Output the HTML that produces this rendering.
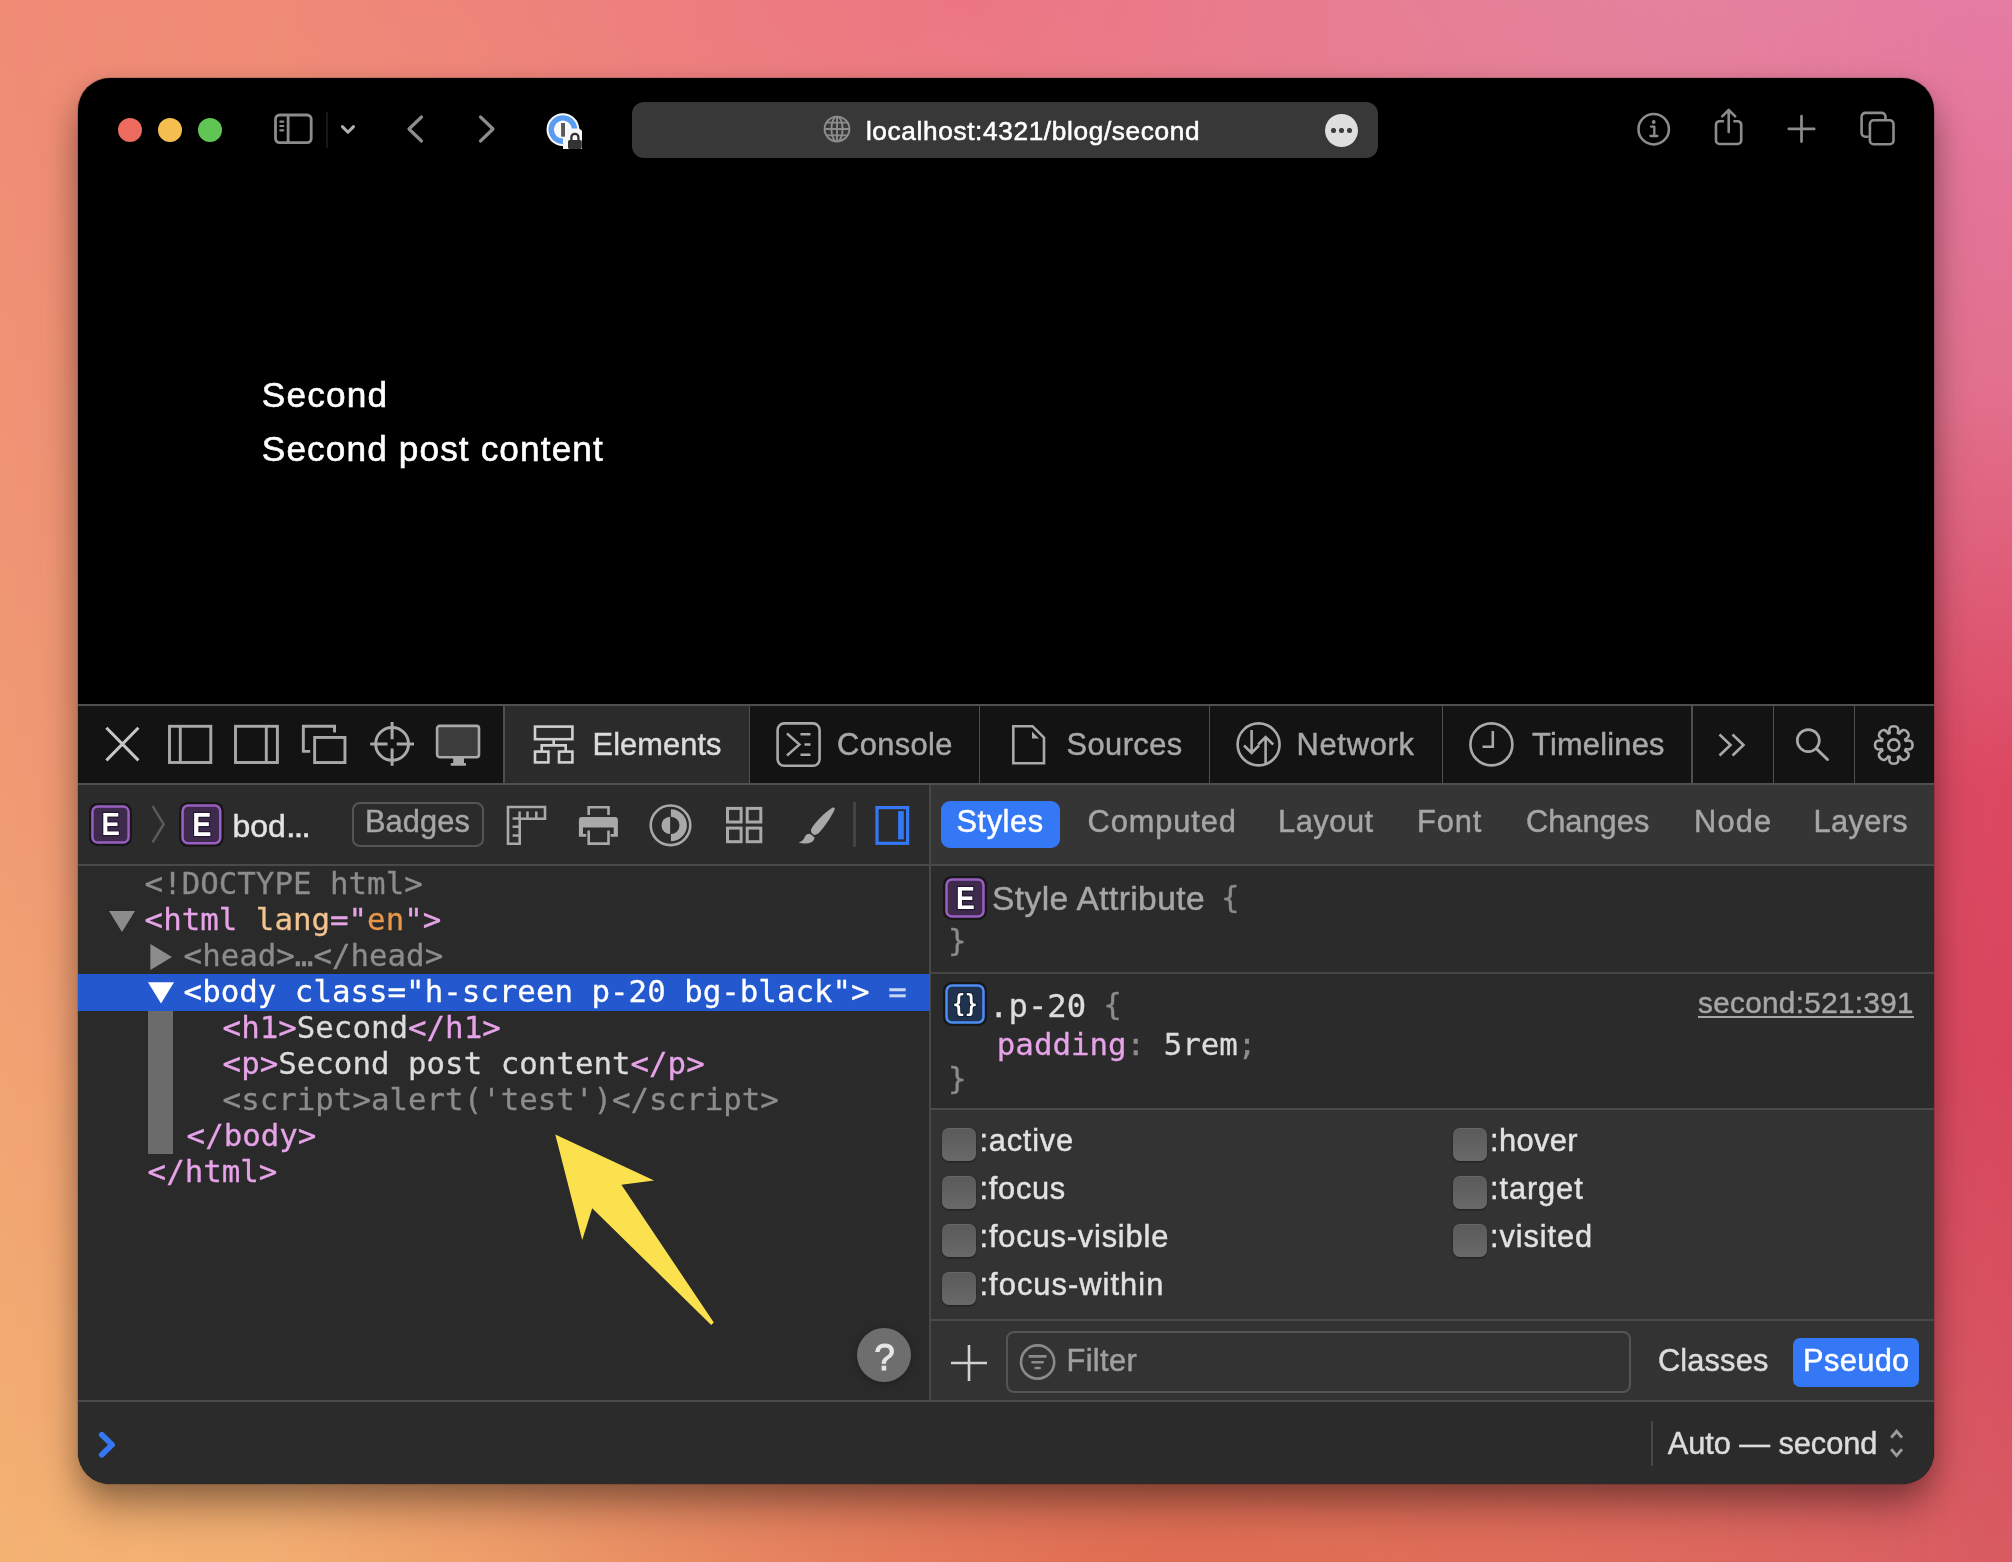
<!DOCTYPE html>
<html lang="en">
<head>
<meta charset="utf-8">
<title>Safari Web Inspector - localhost:4321/blog/second</title>
<style>
html,body{margin:0;padding:0;}
body{width:2012px;height:1562px;overflow:hidden;background:#e87080;}
#desk{position:relative;width:2012px;height:1562px;overflow:hidden;
 background:linear-gradient(to bottom,#e67aa4 0%,#e2708e 25%,#dc4862 50%,#d8465e 68%,#d85a64 100%);}
#deskL{position:absolute;left:0;top:0;width:2012px;height:1562px;
 background:linear-gradient(to bottom,#ef8b75 0%,#f09a73 50%,#f3b272 100%);
 -webkit-mask-image:linear-gradient(to right,#000 0%,rgba(0,0,0,.93) 25%,rgba(0,0,0,.62) 50%,rgba(0,0,0,.3) 72%,rgba(0,0,0,0) 100%);
 mask-image:linear-gradient(to right,#000 0%,rgba(0,0,0,.93) 25%,rgba(0,0,0,.62) 50%,rgba(0,0,0,.3) 72%,rgba(0,0,0,0) 100%);}
#deskB{position:absolute;left:0;top:0;width:2012px;height:1562px;
 background:radial-gradient(ellipse 900px 420px at 58% 100%, rgba(222,104,78,.85) 0%, rgba(222,104,78,0) 100%),
            radial-gradient(ellipse 700px 300px at 48% 0%, rgba(236,112,128,.7) 0%, rgba(236,112,128,0) 100%),
            radial-gradient(ellipse 600px 300px at 72% 0%, rgba(226,134,160,.7) 0%, rgba(226,134,160,0) 100%);}
.b{position:absolute;box-sizing:border-box;}
.t{position:absolute;white-space:pre;line-height:1em;}
.s{font-family:"Liberation Sans",sans-serif;-webkit-text-stroke:0.45px;}
.m{font-family:"DejaVu Sans Mono","Liberation Mono",monospace;-webkit-text-stroke:0.3px;}
#win{position:absolute;left:78px;top:78px;width:1856px;height:1406px;border-radius:32px;background:#000;
 box-shadow:0 0 0 1px rgba(0,0,0,.12), 0 24px 42px -2px rgba(0,0,0,.36), 0 8px 22px rgba(0,0,0,.13);}
#clip{will-change:transform;position:absolute;left:78px;top:78px;width:1856px;height:1406px;border-radius:32px;overflow:hidden;}
#clip > .in{position:absolute;left:-78px;top:-78px;width:2012px;height:1562px;}

</style>
</head>
<body>
<div id="desk">
<div id="deskL"></div><div id="deskB"></div><div id="win"></div>
<div id="clip"><div class="in">
<div class="b" style="left:118px;top:118px;width:24px;height:24px;border-radius:50%;background:#ec6a5e;"></div>
<div class="b" style="left:158px;top:118px;width:24px;height:24px;border-radius:50%;background:#f4bf4f;"></div>
<div class="b" style="left:198px;top:118px;width:24px;height:24px;border-radius:50%;background:#61c554;"></div>
<svg class="b" style="left:270px;top:110px;" width="48" height="40" viewBox="0 0 48 40"><rect x="5.5" y="5" width="35.7" height="27.6" rx="4" fill="none" stroke="#8c8c8c" stroke-width="2.8"/><path d="M18.1 5V32.6" stroke="#8c8c8c" stroke-width="2.8"/><path d="M10.3 11.6h3M10.3 16h3M10.3 20.3h3" stroke="#8c8c8c" stroke-width="2.2" stroke-linecap="round"/></svg>
<div class="b" style="left:326px;top:112px;width:2px;height:36px;background:#181818;"></div>
<svg class="b" style="left:336px;top:120px;" width="24" height="20" viewBox="0 0 24 20"><path d="M6.4 6.6L11.95 12.2L17.5 6.6" fill="none" stroke="#b0b0b0" stroke-width="3" stroke-linecap="round" stroke-linejoin="round"/></svg>
<svg class="b" style="left:400px;top:108px;" width="32" height="42" viewBox="0 0 32 42"><path d="M21.5 9L9 21L21.5 33" fill="none" stroke="#8c8c8c" stroke-width="3.2" stroke-linecap="round" stroke-linejoin="round"/></svg>
<svg class="b" style="left:471.3px;top:108px;" width="32" height="42" viewBox="0 0 32 42"><path d="M9.5 9L22 21L9.5 33" fill="none" stroke="#8c8c8c" stroke-width="3.2" stroke-linecap="round" stroke-linejoin="round"/></svg>
<svg class="b" style="left:542px;top:110px;" width="44" height="42" viewBox="0 0 44 42"><circle cx="20.9" cy="19.6" r="16.4" fill="#fafafa"/><circle cx="20.9" cy="19.6" r="11.7" fill="none" stroke="#5b9cf3" stroke-width="5.4"/><path d="M21 39V18.4H37L40 20.8V39Z" fill="#f7f7f7"/><rect x="19.1" y="13" width="3.9" height="13.7" fill="#585858"/><path d="M29.35 31V27.4a3.55 3.55 0 0 1 7.1 0V31" fill="none" stroke="#333" stroke-width="2.3"/><rect x="26" y="30" width="13.8" height="8.9" rx="1.6" fill="#333"/></svg>
<div class="b" style="left:632px;top:102px;width:746px;height:56px;border-radius:12px;background:#383838;"></div>
<svg class="b" style="left:822px;top:114px;" width="30" height="30" viewBox="0 0 30 30"><g fill="none" stroke="#8c8c8c" stroke-width="1.9"><circle cx="15" cy="15" r="12.4"/><ellipse cx="15" cy="15" rx="5.6" ry="12.4"/><path d="M15 2.6V27.4M2.6 15H27.4M4.6 8.6H25.4M4.6 21.4H25.4"/></g></svg>
<span id="url" class="t s" style="left:865.90px;top:118.42px;font-size:26.2px;color:#ffffff;letter-spacing:0.648px;-webkit-text-stroke:0.55px;">localhost:4321/blog/second</span>
<div class="b" style="left:1325px;top:114px;width:33px;height:33px;border-radius:50%;background:#dedede;"></div>
<div class="b" style="left:1331.3999999999999px;top:128.3px;width:4.4px;height:4.4px;border-radius:50%;background:#3a3a3a;"></div>
<div class="b" style="left:1339.3999999999999px;top:128.3px;width:4.4px;height:4.4px;border-radius:50%;background:#3a3a3a;"></div>
<div class="b" style="left:1347.3999999999999px;top:128.3px;width:4.4px;height:4.4px;border-radius:50%;background:#3a3a3a;"></div>
<svg class="b" style="left:1634px;top:108px;" width="40" height="42" viewBox="0 0 40 42"><circle cx="19.7" cy="21.2" r="15.2" fill="none" stroke="#8c8c8c" stroke-width="2.5"/><circle cx="19.7" cy="14" r="1.9" fill="#8c8c8c"/><path d="M17 18.6h3.3v9M16.4 28h7" fill="none" stroke="#8c8c8c" stroke-width="2.3" stroke-linecap="round" stroke-linejoin="round"/></svg>
<svg class="b" style="left:1708px;top:104px;" width="42" height="46" viewBox="0 0 42 46"><path d="M15 17.2H11.6a3.6 3.6 0 0 0-3.6 3.6V36.4a3.6 3.6 0 0 0 3.6 3.6H29.6a3.6 3.6 0 0 0 3.6-3.6V20.8a3.6 3.6 0 0 0-3.6-3.6H26.4" fill="none" stroke="#8c8c8c" stroke-width="2.6" stroke-linecap="round"/><path d="M20.7 28V6.4M14.2 12.4L20.7 6L27.2 12.4" fill="none" stroke="#8c8c8c" stroke-width="2.6" stroke-linecap="round" stroke-linejoin="round"/></svg>
<svg class="b" style="left:1786px;top:113px;" width="32" height="32" viewBox="0 0 32 32"><path d="M15.5 3.2V28.6M2.8 15.9H28.2" stroke="#8c8c8c" stroke-width="2.7" stroke-linecap="round"/></svg>
<svg class="b" style="left:1856px;top:106px;" width="44" height="44" viewBox="0 0 44 44"><path d="M12.6 30.8H9.4a3.8 3.8 0 0 1-3.8-3.8V10.7a3.8 3.8 0 0 1 3.8-3.8H25.7a3.8 3.8 0 0 1 3.8 3.8V13.4" fill="none" stroke="#8c8c8c" stroke-width="2.6"/><rect x="13.9" y="14.3" width="23.6" height="24" rx="3.8" fill="none" stroke="#8c8c8c" stroke-width="2.6"/></svg>
<span id="h1" class="t s" style="left:261.80px;top:376.50px;font-size:35.2px;color:#ffffff;letter-spacing:1.188px;-webkit-text-stroke:0.6px;">Second</span>
<span id="p1" class="t s" style="left:261.80px;top:430.60px;font-size:35.2px;color:#ffffff;letter-spacing:1.120px;-webkit-text-stroke:0.6px;">Second post content</span>
<div class="b" style="left:78px;top:704px;width:1856px;height:2px;background:#4f4f4f;"></div>
<div class="b" style="left:78px;top:706px;width:1856px;height:77px;background:#131313;"></div>
<div class="b" style="left:504px;top:706px;width:245px;height:77px;background:#2b2b2b;"></div>
<div class="b" style="left:78px;top:783px;width:1856px;height:2px;background:#4f4f4f;"></div>
<div class="b" style="left:503px;top:706px;width:1.6px;height:77px;background:#4f4f4f;"></div>
<div class="b" style="left:748.5px;top:706px;width:1.6px;height:77px;background:#4f4f4f;"></div>
<div class="b" style="left:978.5px;top:706px;width:1.6px;height:77px;background:#4f4f4f;"></div>
<div class="b" style="left:1208.5px;top:706px;width:1.6px;height:77px;background:#4f4f4f;"></div>
<div class="b" style="left:1441.5px;top:706px;width:1.6px;height:77px;background:#4f4f4f;"></div>
<div class="b" style="left:1691px;top:706px;width:1.6px;height:77px;background:#4f4f4f;"></div>
<div class="b" style="left:1772.5px;top:706px;width:1.6px;height:77px;background:#4f4f4f;"></div>
<div class="b" style="left:1853.5px;top:706px;width:1.6px;height:77px;background:#4f4f4f;"></div>
<svg class="b" style="left:100px;top:722px;" width="44" height="44" viewBox="0 0 44 44"><path d="M6.4 5.8L38.4 38.4M38.4 5.8L6.4 38.4" stroke="#c6c6c6" stroke-width="3"/></svg>
<svg class="b" style="left:164px;top:722px;" width="52" height="46" viewBox="0 0 52 46"><rect x="5.5" y="4.3" width="41.3" height="36.2" fill="none" stroke="#a9a9a9" stroke-width="2.9"/><path d="M16.3 4.3V40.5" stroke="#a9a9a9" stroke-width="2.9"/></svg>
<svg class="b" style="left:230px;top:722px;" width="52" height="46" viewBox="0 0 52 46"><rect x="5.5" y="4.3" width="41.9" height="36.2" fill="none" stroke="#a9a9a9" stroke-width="2.9"/><path d="M36.3 4.3V40.5" stroke="#a9a9a9" stroke-width="2.9"/></svg>
<svg class="b" style="left:298px;top:722px;" width="52" height="46" viewBox="0 0 52 46"><path d="M12.2 29.35H5.35V4.25H36.55V10.6" fill="none" stroke="#a9a9a9" stroke-width="2.9"/><rect x="16.65" y="15.45" width="30.3" height="25.1" fill="none" stroke="#a9a9a9" stroke-width="2.9"/></svg>
<svg class="b" style="left:366px;top:718px;" width="52" height="52" viewBox="0 0 52 52"><circle cx="26.1" cy="25.9" r="16.4" fill="none" stroke="#a9a9a9" stroke-width="3"/><path d="M26.1 4V21.3M26.1 30.5V47.8M4.2 25.9H21.5M30.7 25.9H48" stroke="#a9a9a9" stroke-width="3"/></svg>
<svg class="b" style="left:432px;top:722px;" width="52" height="46" viewBox="0 0 52 46"><rect x="5.1" y="3.9" width="41.9" height="31.3" rx="2.6" fill="#3c3c3c" stroke="#a9a9a9" stroke-width="2.6"/><rect x="21.2" y="36" width="10.8" height="5.4" fill="#a9a9a9"/><rect x="18.7" y="41" width="15.3" height="2.7" rx="0.8" fill="#a9a9a9"/></svg>
<svg class="b" style="left:530px;top:722px;" width="48" height="46" viewBox="0 0 48 46"><g fill="none" stroke="#d0d0d0" stroke-width="2.6"><rect x="5" y="4.6" width="37.4" height="12.6"/><rect x="5" y="29.6" width="13.4" height="10.8"/><rect x="29" y="29.6" width="13.4" height="10.8"/><path d="M11.7 29.6V23.4H35.7V29.6M23.7 17.2V23.4"/></g></svg>
<span id="tab_el" class="t s" style="left:592.50px;top:730.23px;font-size:30.8px;color:#dcdcdc;letter-spacing:0.087px;">Elements</span>
<svg class="b" style="left:772px;top:718px;" width="54" height="54" viewBox="0 0 54 54"><rect x="5.6" y="5.4" width="42" height="42.4" rx="6.5" fill="none" stroke="#a9a9a9" stroke-width="2.6"/><path d="M15 15.5L27.5 26.5L15 37.5M28.5 16.2H38.5M32.5 26.5H38.5M28.5 36.8H38.5" fill="none" stroke="#a9a9a9" stroke-width="2.4"/></svg>
<span id="tab_co" class="t s" style="left:837.00px;top:730.23px;font-size:30.8px;color:#a8a8a8;letter-spacing:0.390px;">Console</span>
<svg class="b" style="left:1006px;top:720px;" width="46" height="50" viewBox="0 0 46 50"><path d="M7.3 6.2H26.5L38 17.7V43.2H7.3Z" fill="none" stroke="#a9a9a9" stroke-width="2.6"/><path d="M26 11.5V18.5H33Z" fill="#a9a9a9"/></svg>
<span id="tab_so" class="t s" style="left:1066.50px;top:730.23px;font-size:30.8px;color:#a8a8a8;letter-spacing:0.450px;">Sources</span>
<svg class="b" style="left:1232px;top:718px;" width="54" height="54" viewBox="0 0 54 54"><g fill="none" stroke="#a9a9a9" stroke-width="2.6"><circle cx="26.6" cy="26.4" r="21"/><path d="M19.6 12V34.5M12 27.5L19.6 35L27 27.5M33.6 46V19.5M26.2 26.5L33.6 19L41.2 26.5"/></g></svg>
<span id="tab_ne" class="t s" style="left:1296.50px;top:730.23px;font-size:30.8px;color:#a8a8a8;letter-spacing:0.750px;">Network</span>
<svg class="b" style="left:1464px;top:718px;" width="54" height="54" viewBox="0 0 54 54"><g fill="none" stroke="#a9a9a9" stroke-width="2.6"><circle cx="27.4" cy="26.4" r="21"/><path d="M28.8 13V28.8H18.5"/></g></svg>
<span id="tab_ti" class="t s" style="left:1532.00px;top:730.23px;font-size:30.8px;color:#a8a8a8;letter-spacing:0.225px;">Timelines</span>
<svg class="b" style="left:1714px;top:728px;" width="36" height="34" viewBox="0 0 36 34"><path d="M5.5 6.5L16.5 17L5.5 27.5M18.5 6.5L29.5 17L18.5 27.5" fill="none" stroke="#a9a9a9" stroke-width="2.6"/></svg>
<svg class="b" style="left:1792px;top:724px;" width="40" height="40" viewBox="0 0 40 40"><circle cx="16.3" cy="16.6" r="11" fill="none" stroke="#a9a9a9" stroke-width="2.7"/><path d="M24.3 24.6L35.5 35.5" stroke="#a9a9a9" stroke-width="2.9" stroke-linecap="round"/></svg>
<svg class="b" style="left:1870px;top:720px;" width="48" height="50" viewBox="0 0 48 50"><path d="M19.73 13.07Q17.90 6.21 23.80 6.20Q29.70 6.21 27.87 13.07A12.60 12.60 0 0 1 29.36 13.69Q32.92 7.54 37.09 11.71Q41.26 15.88 35.11 19.44A12.60 12.60 0 0 1 35.73 20.93Q42.59 19.10 42.60 25.00Q42.59 30.90 35.73 29.07A12.60 12.60 0 0 1 35.11 30.56Q41.26 34.12 37.09 38.29Q32.92 42.46 29.36 36.31A12.60 12.60 0 0 1 27.87 36.93Q29.70 43.79 23.80 43.80Q17.90 43.79 19.73 36.93A12.60 12.60 0 0 1 18.24 36.31Q14.68 42.46 10.51 38.29Q6.34 34.12 12.49 30.56A12.60 12.60 0 0 1 11.87 29.07Q5.01 30.90 5.00 25.00Q5.01 19.10 11.87 20.93A12.60 12.60 0 0 1 12.49 19.44Q6.34 15.88 10.51 11.71Q14.68 7.54 18.24 13.69A12.60 12.60 0 0 1 19.73 13.07Z" fill="none" stroke="#a9a9a9" stroke-width="2.6" stroke-linejoin="round"/><circle cx="23.8" cy="25" r="5.6" fill="none" stroke="#a9a9a9" stroke-width="2.6"/></svg>
<div class="b" style="left:78px;top:785px;width:852px;height:79px;background:#2b2b2b;"></div>
<div class="b" style="left:931px;top:785px;width:1003px;height:79px;background:#353535;"></div>
<div class="b" style="left:78px;top:864px;width:1856px;height:1.6px;background:#4a4a4a;"></div>
<svg class="b" style="left:88.8px;top:803px;" width="43" height="43" viewBox="0 0 44 44"><rect x="0" y="0" width="44" height="44" rx="8.5" fill="#171717"/><rect x="3.5" y="3.5" width="37" height="37" rx="5.5" fill="#3d2a4c" stroke="#9b5fc2" stroke-width="2.5"/><text x="12.9" y="33.2" font-family="Liberation Sans, sans-serif" font-weight="bold" font-size="32" textLength="18.8" lengthAdjust="spacingAndGlyphs" fill="#fff" stroke="#241830" stroke-width="2.6" stroke-linejoin="round" paint-order="stroke">E</text></svg>
<svg class="b" style="left:148px;top:800px;" width="20" height="48" viewBox="0 0 20 48"><path d="M4.6 6L15.6 24.2L4.6 42.4" fill="none" stroke="#5c5c5c" stroke-width="2.4"/></svg>
<svg class="b" style="left:179px;top:802.2px;" width="44.8" height="44.8" viewBox="0 0 44 44"><rect x="0" y="0" width="44" height="44" rx="8.5" fill="#171717"/><rect x="3.5" y="3.5" width="37" height="37" rx="5.5" fill="#3d2a4c" stroke="#9b5fc2" stroke-width="2.5"/><text x="12.9" y="33.2" font-family="Liberation Sans, sans-serif" font-weight="bold" font-size="32" textLength="18.8" lengthAdjust="spacingAndGlyphs" fill="#fff" stroke="#241830" stroke-width="2.6" stroke-linejoin="round" paint-order="stroke">E</text></svg>
<span id="crumb" class="t s" style="left:232.4px;top:809.71px;font-size:32px;color:#e4e4e4;">bod<span style="font-size:24px;font-weight:bold;margin-left:0.6px;">…</span></span>
<div class="b" style="left:352px;top:802px;width:132px;height:45px;border:2px solid #555;border-radius:8px;"></div>
<span id="badges" class="t s" style="left:365.00px;top:807.23px;font-size:30.8px;color:#a6a6a6;letter-spacing:0.072px;">Badges</span>
<svg class="b" style="left:503px;top:802px;" width="48" height="48" viewBox="0 0 48 48"><path d="M5 5H42V16.8H16.7V41.8H5Z" fill="none" stroke="#a9a9a9" stroke-width="2.6"/><path d="M16.6 9.6V16.8M24.5 9.6V16.8M33.3 9.6V16.8M9.6 16.4H17M9.6 24.7H16.7M9.6 33.6H16.7" stroke="#a9a9a9" stroke-width="2.5"/></svg>
<svg class="b" style="left:574px;top:802px;" width="48" height="48" viewBox="0 0 48 48"><path d="M14.7 13V5.3H34.5V13" fill="none" stroke="#a9a9a9" stroke-width="2.6"/><path d="M4.9 18a3 3 0 0 1 3-3H40.9a3 3 0 0 1 3 3V34.7H36.6V32H39.7V25.4H9V32H12.2V34.7H4.9Z" fill="#a9a9a9"/><path d="M14.7 28.4V41.6H34.5V28.4" fill="none" stroke="#a9a9a9" stroke-width="2.6"/></svg>
<svg class="b" style="left:646px;top:801px;" width="50" height="50" viewBox="0 0 50 50"><circle cx="24.5" cy="24.3" r="19.8" fill="none" stroke="#a9a9a9" stroke-width="2.6"/><path d="M24.1 15.7A8.6 8.6 0 0 0 24.1 32.9Z" fill="#a9a9a9"/><path d="M24.9 8.3A16 16 0 0 1 24.9 40.3V32.9A8.6 8.6 0 0 0 24.9 15.7Z" fill="#a9a9a9"/></svg>
<svg class="b" style="left:722px;top:803px;" width="46" height="46" viewBox="0 0 46 46"><g fill="none" stroke="#a9a9a9" stroke-width="3"><rect x="5.5" y="5.4" width="13.6" height="13.6"/><rect x="25.2" y="5.4" width="13.6" height="13.6"/><rect x="5.5" y="25.1" width="13.6" height="13.6"/><rect x="25.2" y="25.1" width="13.6" height="13.6"/></g></svg>
<svg class="b" style="left:795px;top:802px;" width="44" height="48" viewBox="0 0 44 48"><path d="M37.6 5.6C39 5 40.4 6.2 39.6 7.8C36.4 14.6 30 24.6 23.4 31.4L16.6 34.2L16 27.4C20.4 19.6 30.4 10 37.6 5.6Z" fill="#a9a9a9"/><path d="M15.4 32L19.6 35.4C19.4 39.8 13.6 43.4 3.6 40.4C7.4 39.4 8.6 37.6 9.6 35.2C10.6 32.6 13.2 31.2 15.4 32Z" fill="#a9a9a9"/><path d="M14.6 30.4L21.4 35.6" stroke="#2b2b2b" stroke-width="1.4"/></svg>
<div class="b" style="left:853.2px;top:802px;width:2.4px;height:45px;background:#444;"></div>
<svg class="b" style="left:872px;top:802px;" width="42" height="48" viewBox="0 0 42 48"><rect x="5" y="5.6" width="30.6" height="35.7" fill="none" stroke="#3478f6" stroke-width="3.2"/><rect x="26.1" y="9.1" width="5.7" height="28.3" fill="#3478f6"/></svg>
<div class="b" style="left:941px;top:801.2px;width:119px;height:46.6px;background:#3478f6;border-radius:9px;"></div>
<span id="st_styles" class="t s" style="left:956.50px;top:807.23px;font-size:30.8px;color:#ffffff;letter-spacing:0.540px;">Styles</span>
<span id="st_comp" class="t s" style="left:1087.50px;top:807.23px;font-size:30.8px;color:#a6a6a6;letter-spacing:0.900px;">Computed</span>
<span id="st_lay" class="t s" style="left:1278.00px;top:807.23px;font-size:30.8px;color:#a6a6a6;letter-spacing:0.540px;">Layout</span>
<span id="st_font" class="t s" style="left:1417.00px;top:807.23px;font-size:30.8px;color:#a6a6a6;letter-spacing:0.900px;">Font</span>
<span id="st_chg" class="t s" style="left:1526.00px;top:807.23px;font-size:30.8px;color:#a6a6a6;">Changes</span>
<span id="st_node" class="t s" style="left:1694.00px;top:807.23px;font-size:30.8px;color:#a6a6a6;letter-spacing:1.200px;">Node</span>
<span id="st_lyr" class="t s" style="left:1813.50px;top:807.23px;font-size:30.8px;color:#a6a6a6;letter-spacing:0.360px;">Layers</span>
<div class="b" style="left:78px;top:865.6px;width:852px;height:535px;background:#2a2a2a;"></div>
<div class="b" style="left:929.3px;top:785px;width:2px;height:616px;background:#484848;"></div>
<div class="b" style="left:78px;top:974px;width:851.6px;height:37px;background:#2358cf;"></div>
<div class="b" style="left:148px;top:1011px;width:25px;height:143px;background:#6b6b6b;"></div>
<span id="r0" class="t m" style="left:144.60px;top:868.34px;font-size:30.8px;"><span style="color:#8c8c8c">&lt;!DOCTYPE html&gt;</span></span>
<span id="r1" class="t m" style="left:144.60px;top:904.34px;font-size:30.8px;"><span style="color:#e6a3e8">&lt;html </span><span style="color:#f2c490">lang</span><span style="color:#e6a3e8">="</span><span style="color:#e8964a">en</span><span style="color:#e6a3e8">"&gt;</span></span>
<span id="r2" class="t m" style="left:183.60px;top:940.34px;font-size:30.8px;"><span style="color:#8c8c8c">&lt;head&gt;…&lt;/head&gt;</span></span>
<span id="r3" class="t m" style="left:183.60px;top:976.34px;font-size:30.8px;"><span style="color:#ffffff">&lt;body class="h-screen p-20 bg-black"&gt;</span><span style="color:#c9d6f3"> =</span></span>
<span id="r4" class="t m" style="left:222.60px;top:1012.34px;font-size:30.8px;"><span style="color:#e6a3e8">&lt;h1&gt;</span><span style="color:#dcdcdc">Second</span><span style="color:#e6a3e8">&lt;/h1&gt;</span></span>
<span id="r5" class="t m" style="left:222.60px;top:1048.34px;font-size:30.8px;"><span style="color:#e6a3e8">&lt;p&gt;</span><span style="color:#dcdcdc">Second post content</span><span style="color:#e6a3e8">&lt;/p&gt;</span></span>
<span id="r6" class="t m" style="left:222.60px;top:1084.34px;font-size:30.8px;"><span style="color:#8c8c8c">&lt;script&gt;alert('test')&lt;/script&gt;</span></span>
<span id="r7" class="t m" style="left:186.60px;top:1120.34px;font-size:30.8px;"><span style="color:#e6a3e8">&lt;/body&gt;</span></span>
<span id="r8" class="t m" style="left:147.60px;top:1156.34px;font-size:30.8px;"><span style="color:#e6a3e8">&lt;/html&gt;</span></span>
<svg class="b" style="left:107px;top:909px;" width="30" height="26" viewBox="0 0 30 26"><path d="M2 2H28L15 23Z" fill="#8c8c8c"/></svg>
<svg class="b" style="left:148px;top:942px;" width="26" height="30" viewBox="0 0 26 30"><path d="M2.4 2L24 15L2.4 28Z" fill="#8c8c8c"/></svg>
<svg class="b" style="left:146px;top:980px;" width="30" height="26" viewBox="0 0 30 26"><path d="M2 2.2H28L15 23.6Z" fill="#ffffff"/></svg>
<svg class="b" style="left:0;top:0" width="2012" height="1562" viewBox="0 0 2012 1562"><path d="M555.3 1134.6L654.1 1180.4L621.4 1184.8L713.8 1322.6L711.2 1325L592.2 1208.3L582.2 1240.1Z" fill="#fbe14d"/></svg>
<div class="b" style="left:857px;top:1328px;width:54px;height:54px;border-radius:50%;background:#6e6e6e;box-shadow:0 1px 7px rgba(0,0,0,.3);"></div>
<span id="help" class="t s" style="left:874.30px;top:1338.68px;font-size:37px;color:#e6e6e6;-webkit-text-stroke:1px;">?</span>
<div class="b" style="left:931.2px;top:865.6px;width:1003px;height:243.4px;background:#2b2b2b;"></div>
<div class="b" style="left:931.2px;top:972px;width:1003px;height:1.6px;background:#454545;"></div>
<svg class="b" style="left:942.5px;top:875.5px;" width="44" height="44" viewBox="0 0 44 44"><rect x="0" y="0" width="44" height="44" rx="8.5" fill="#171717"/><rect x="3.5" y="3.5" width="37" height="37" rx="5.5" fill="#3d2a4c" stroke="#9b5fc2" stroke-width="2.5"/><text x="12.9" y="33.2" font-family="Liberation Sans, sans-serif" font-weight="bold" font-size="32" textLength="18.8" lengthAdjust="spacingAndGlyphs" fill="#fff" stroke="#241830" stroke-width="2.6" stroke-linejoin="round" paint-order="stroke">E</text></svg>
<span id="sa" class="t s" style="left:992.00px;top:881.56px;font-size:33.6px;color:#a6a6a6;letter-spacing:0.386px;">Style Attribute</span>
<span id="sa_b" class="t m" style="left:1221.00px;top:881.94px;font-size:30.8px;color:#8c8c8c;">{</span>
<span id="sa_c" class="t m" style="left:948.00px;top:924.54px;font-size:30.8px;color:#8c8c8c;">}</span>
<svg class="b" style="left:942.5px;top:982.3px;" width="44" height="44" viewBox="0 0 44 44"><rect x="0" y="0" width="44" height="44" rx="8.5" fill="#171717"/><rect x="3.5" y="3.5" width="37" height="37" rx="5.5" fill="#1f3350" stroke="#4c8ef5" stroke-width="2.5"/><text x="22" y="30" text-anchor="middle" font-family="DejaVu Sans Mono, monospace" font-weight="bold" font-size="24" fill="#fff" stroke="#101c30" stroke-width="2.2" paint-order="stroke" textLength="25" lengthAdjust="spacingAndGlyphs">{}</text></svg>
<span id="rule_s" class="t m" style="left:989.00px;top:990.37px;font-size:32.3px;color:#dcdcdc;">.p-20</span>
<span id="rule_b" class="t m" style="left:1103.20px;top:989.14px;font-size:30.8px;color:#8c8c8c;">{</span>
<span id="decl" class="t m" style="left:996.80px;top:1028.84px;font-size:30.8px;"><span style="color:#e6a3e8">padding</span><span style="color:#8c8c8c">: </span><span style="color:#dcdcdc">5rem</span><span style="color:#8c8c8c">;</span></span>
<span id="rule_c" class="t m" style="left:948.00px;top:1062.74px;font-size:30.8px;color:#8c8c8c;">}</span>
<span id="src" class="t s" style="left:1698.00px;top:987.94px;font-size:29.6px;color:#a6a6a6;letter-spacing:0.379px;text-decoration:underline;text-decoration-thickness:2px;text-underline-offset:3px;">second:521:391</span>
<div class="b" style="left:931.2px;top:1108px;width:1003px;height:1.6px;background:#4a4a4a;"></div>
<div class="b" style="left:931.2px;top:1109.6px;width:1003px;height:210px;background:#333333;"></div>
<div class="b" style="left:942px;top:1128px;width:33.5px;height:32.5px;border-radius:7px;background:linear-gradient(#5a5a5a,#696969);box-shadow:0 1px 2px rgba(0,0,0,.45), inset 0 1px 0 rgba(255,255,255,.08);"></div>
<span id="ps_l0" class="t s" style="left:979.50px;top:1126.23px;font-size:30.8px;color:#e2e2e2;letter-spacing:0.750px;">:active</span>
<div class="b" style="left:1453px;top:1128px;width:33.5px;height:32.5px;border-radius:7px;background:linear-gradient(#5a5a5a,#696969);box-shadow:0 1px 2px rgba(0,0,0,.45), inset 0 1px 0 rgba(255,255,255,.08);"></div>
<span id="ps_r0" class="t s" style="left:1490.00px;top:1126.23px;font-size:30.8px;color:#e2e2e2;letter-spacing:0.360px;">:hover</span>
<div class="b" style="left:942px;top:1176px;width:33.5px;height:32.5px;border-radius:7px;background:linear-gradient(#5a5a5a,#696969);box-shadow:0 1px 2px rgba(0,0,0,.45), inset 0 1px 0 rgba(255,255,255,.08);"></div>
<span id="ps_l1" class="t s" style="left:979.50px;top:1174.23px;font-size:30.8px;color:#e2e2e2;letter-spacing:0.720px;">:focus</span>
<div class="b" style="left:1453px;top:1176px;width:33.5px;height:32.5px;border-radius:7px;background:linear-gradient(#5a5a5a,#696969);box-shadow:0 1px 2px rgba(0,0,0,.45), inset 0 1px 0 rgba(255,255,255,.08);"></div>
<span id="ps_r1" class="t s" style="left:1490.00px;top:1174.23px;font-size:30.8px;color:#e2e2e2;letter-spacing:0.900px;">:target</span>
<div class="b" style="left:942px;top:1224px;width:33.5px;height:32.5px;border-radius:7px;background:linear-gradient(#5a5a5a,#696969);box-shadow:0 1px 2px rgba(0,0,0,.45), inset 0 1px 0 rgba(255,255,255,.08);"></div>
<span id="ps_l2" class="t s" style="left:979.50px;top:1222.23px;font-size:30.8px;color:#e2e2e2;letter-spacing:0.831px;">:focus-visible</span>
<div class="b" style="left:1453px;top:1224px;width:33.5px;height:32.5px;border-radius:7px;background:linear-gradient(#5a5a5a,#696969);box-shadow:0 1px 2px rgba(0,0,0,.45), inset 0 1px 0 rgba(255,255,255,.08);"></div>
<span id="ps_r2" class="t s" style="left:1490.00px;top:1222.23px;font-size:30.8px;color:#e2e2e2;letter-spacing:0.900px;">:visited</span>
<div class="b" style="left:942px;top:1272px;width:33.5px;height:32.5px;border-radius:7px;background:linear-gradient(#5a5a5a,#696969);box-shadow:0 1px 2px rgba(0,0,0,.45), inset 0 1px 0 rgba(255,255,255,.08);"></div>
<span id="ps_l3" class="t s" style="left:979.50px;top:1270.23px;font-size:30.8px;color:#e2e2e2;letter-spacing:1.050px;">:focus-within</span>
<div class="b" style="left:931.2px;top:1319px;width:1003px;height:1.6px;background:#4a4a4a;"></div>
<div class="b" style="left:931.2px;top:1320.6px;width:1003px;height:80px;background:#333333;"></div>
<svg class="b" style="left:949px;top:1343px;" width="40" height="40" viewBox="0 0 40 40"><path d="M20 2V38M2 20H38" stroke="#d2d2d2" stroke-width="2.6"/></svg>
<div class="b" style="left:1006.4px;top:1331px;width:624.4px;height:62px;border:2px solid #555;border-radius:8px;"></div>
<svg class="b" style="left:1017px;top:1341px;" width="42" height="42" viewBox="0 0 42 42"><g fill="none" stroke="#8a8a8a"><circle cx="20.6" cy="21" r="16.6" stroke-width="2.6"/><path d="M11.6 15.4H29.6M14.4 21.2H26.8M17.4 27H23.8" stroke-width="2.6"/></g></svg>
<span id="filter" class="t s" style="left:1066.50px;top:1346.33px;font-size:30.8px;color:#a0a0a0;letter-spacing:0.360px;">Filter</span>
<span id="classes" class="t s" style="left:1657.90px;top:1346.33px;font-size:30.8px;color:#dcdcdc;letter-spacing:0.150px;">Classes</span>
<div class="b" style="left:1793.4px;top:1337.5px;width:126px;height:49px;background:#3478f6;border-radius:7px;"></div>
<span id="pseudo" class="t s" style="left:1803.00px;top:1346.33px;font-size:30.8px;color:#ffffff;letter-spacing:0.360px;">Pseudo</span>
<div class="b" style="left:78px;top:1400px;width:1856px;height:1.6px;background:#4a4a4a;"></div>
<div class="b" style="left:78px;top:1401.6px;width:1856px;height:83px;background:#2b2b2b;"></div>
<svg class="b" style="left:92px;top:1428px;" width="30" height="34" viewBox="0 0 30 34"><path d="M9.8 6.8L20 16.8L9.8 26.8" fill="none" stroke="#3478f6" stroke-width="5.8" stroke-linejoin="round" stroke-linecap="round"/></svg>
<div class="b" style="left:1651.2px;top:1421.3px;width:2px;height:44.5px;background:#484848;"></div>
<span id="auto" class="t s" style="left:1667.80px;top:1429.43px;font-size:30.8px;color:#dcdcdc;letter-spacing:-0.080px;">Auto — second</span>
<svg class="b" style="left:1884px;top:1424px;" width="26" height="38" viewBox="0 0 26 38"><path d="M7.2 13.6L12.6 7.2L18 13.6M7.2 25.2L12.6 31.6L18 25.2" fill="none" stroke="#9c9c9c" stroke-width="2.9"/></svg>
</div></div>

</div>
</body>
</html>
